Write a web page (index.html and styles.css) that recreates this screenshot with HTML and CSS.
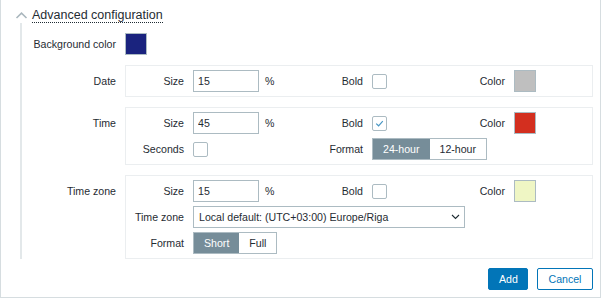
FILE: index.html
```html
<!DOCTYPE html>
<html lang="en">
<head>
  <meta charset="UTF-8" />
  <title>Clock widget - Advanced configuration</title>
  <link rel="stylesheet" href="styles.css">
</head>
<body>

<div class="frame">

  <!-- Cabeçalho da seção -->
  <div class="section-head">
    <svg class="chevron" width="13" height="7" viewBox="0 0 13 7">
      <polyline points="1.5,6 6.5,1.2 11.5,6" fill="none" stroke="#aab7be" stroke-width="1.6" />
    </svg>
    <span class="section-title">Advanced configuration</span>
  </div>

  <div class="section-body">
    <div class="form-grid">

      <div class="label label-mid">Background color</div>
      <div><span class="swatch" style="background:#1a237e"></span></div>

      <!-- Date -->
      <div class="label">Date</div>
      <div class="box">
        <div class="sub-label">Size</div>
        <div class="field"><input class="input-size" type="text" value="15" /><span class="unit">%</span></div>
        <div class="sub-label">Bold</div>
        <div class="field"><span class="checkbox"></span></div>
        <div class="sub-label">Color</div>
        <div class="field"><span class="swatch" style="background:#bfbfbf"></span></div>
      </div>

      <!-- Time -->
      <div class="label">Time</div>
      <div class="box">
        <div class="sub-label">Size</div>
        <div class="field"><input class="input-size" type="text" value="45" /><span class="unit">%</span></div>
        <div class="sub-label">Bold</div>
        <div class="field">
          <span class="checkbox">
            <svg width="13" height="13" viewBox="0 0 13 13"><polyline points="3.2,6.6 5.6,8.8 9.8,4.2" fill="none" stroke="#4796c4" stroke-width="1.2" /></svg>
          </span>
        </div>
        <div class="sub-label">Color</div>
        <div class="field"><span class="swatch" style="background:#d32f1f"></span></div>

        <div class="sub-label">Seconds</div>
        <div class="field"><span class="checkbox"></span></div>
        <div class="sub-label">Format</div>
        <div class="field span-2">
          <div class="segmented">
            <span class="seg active">24-hour</span>
            <span class="seg">12-hour</span>
          </div>
        </div>
      </div>

      <!-- Time zone -->
      <div class="label">Time zone</div>
      <div class="box">
        <div class="sub-label">Size</div>
        <div class="field"><input class="input-size" type="text" value="15" /><span class="unit">%</span></div>
        <div class="sub-label">Bold</div>
        <div class="field"><span class="checkbox"></span></div>
        <div class="sub-label">Color</div>
        <div class="field"><span class="swatch" style="background:#eff6c4"></span></div>

        <div class="sub-label">Time zone</div>
        <div class="field span-rest">
          <div class="select">
            <span>Local default: (UTC+03:00) Europe/Riga</span>
            <svg width="9" height="6" viewBox="0 0 9 6"><polyline points="1,1 4.5,4.5 8,1" fill="none" stroke="#1f2c33" stroke-width="1.1" /></svg>
          </div>
        </div>

        <div class="sub-label">Format</div>
        <div class="field span-rest">
          <div class="segmented">
            <span class="seg active">Short</span>
            <span class="seg">Full</span>
          </div>
        </div>
      </div>

    </div>
  </div>

  <div class="actions">
    <button class="btn-primary">Add</button>
    <button class="btn-secondary">Cancel</button>
  </div>

</div>

</body>
</html>
```

FILE: styles.css
```css
body {
  font-family: "Liberation Sans", Arial, sans-serif;
  font-size: 10.6px;
  color: #1f2c33;
  background: #ffffff;
  margin: 0;
}
.frame {
  width: 601px;
  height: 298px;
  box-sizing: border-box;
  border-left: 1px solid #d6dde0;
  border-right: 1px solid #d6dde0;
  border-bottom: 1px solid #d6dde0;
}
.section-head {
  display: flex;
  align-items: flex-start;
  padding: 8px 0 0 14px;
  height: 15px;
}
.chevron {
  margin-top: 4px;
  margin-right: 4px;
}
.section-title {
  font-size: 12.5px;
  line-height: 14px;
  border-bottom: 1px dotted #1f2c33;
}
.section-body {
  margin: 0 7px 0 19px;
  border-left: 2px solid #e3e8ea;
  padding: 10px 0 0 10px;
}
.form-grid {
  display: grid;
  grid-template-columns: 84px 1fr;
  column-gap: 9px;
  row-gap: 10px;
}
.label {
  text-align: right;
  line-height: 22px;
  padding-top: 5px;
}
.label-mid {
  padding-top: 0;
}
.box {
  border: 1px solid #ebeef0;
  padding: 4px;
  display: grid;
  grid-template-columns: 54px 87px 74px 64px 60px auto;
  grid-auto-rows: 22px;
  column-gap: 9px;
  row-gap: 4px;
  align-items: center;
}
.sub-label {
  text-align: right;
  white-space: nowrap;
}
.field {
  display: flex;
  align-items: center;
  height: 22px;
}
.span-2 {
  grid-column: 4 / span 3;
}
.span-rest {
  grid-column: 2 / span 5;
}
.input-size {
  width: 66px;
  height: 22px;
  box-sizing: border-box;
  border: 1px solid #acbbc2;
  padding: 0 4px;
  margin: 0;
  font-family: inherit;
  font-size: 10.6px;
  color: #1f2c33;
}
.unit {
  margin-left: 6px;
}
.checkbox {
  width: 15px;
  height: 15px;
  box-sizing: border-box;
  border: 1px solid #acbbc2;
  border-radius: 2px;
  display: flex;
  align-items: center;
  justify-content: center;
}
.swatch {
  display: block;
  width: 22px;
  height: 22px;
  box-sizing: border-box;
  border: 1px solid #acbbc2;
}
.segmented {
  display: flex;
  height: 22px;
  box-sizing: border-box;
  border: 1px solid #acbbc2;
}
.seg {
  padding: 0 10px;
  line-height: 20px;
  background: #ffffff;
}
.seg.active {
  background: #768d99;
  color: #ffffff;
}
.select {
  width: 272px;
  height: 22px;
  box-sizing: border-box;
  border: 1px solid #acbbc2;
  padding: 0 4px 0 5px;
  display: flex;
  align-items: center;
  justify-content: space-between;
}
.actions {
  display: flex;
  justify-content: flex-end;
  gap: 9px;
  margin: 9px 7px 0 0;
}
button {
  height: 22px;
  font-family: inherit;
  font-size: 10.6px;
  border-radius: 2px;
  padding: 0 10px;
  cursor: pointer;
}
.btn-primary {
  width: 40px;
  background: #0275b8;
  border: 1px solid #0275b8;
  color: #ffffff;
}
.btn-secondary {
  width: 56px;
  background: #ffffff;
  border: 1px solid #0275b8;
  color: #0275b8;
}
```
